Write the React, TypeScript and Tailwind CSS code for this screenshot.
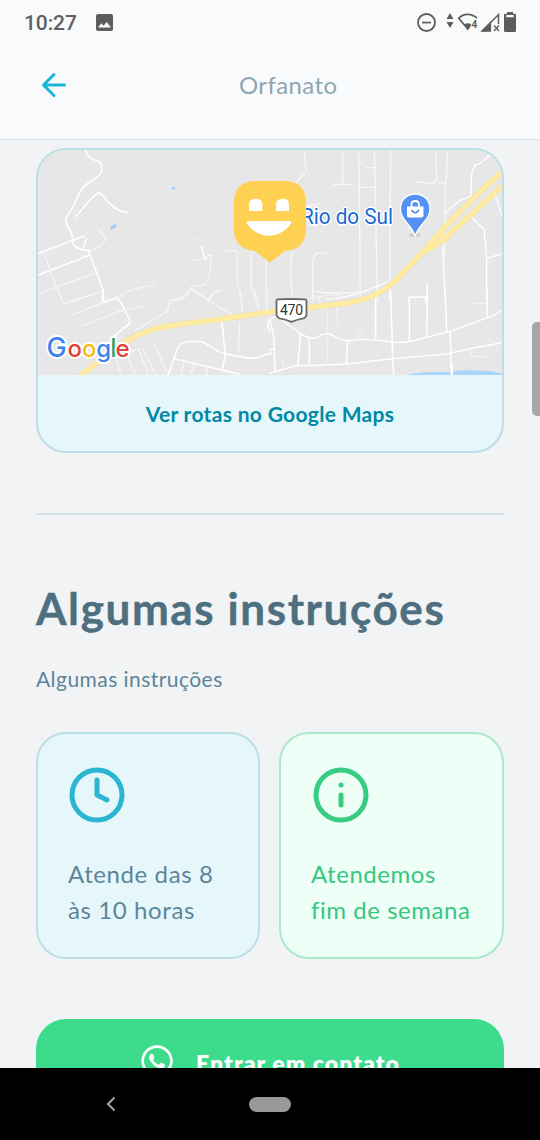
import React from "react";
import { FaWhatsapp } from "react-icons/fa";

function StatusBar() {
  return (
    <div className="flex h-[46px] shrink-0 items-center pl-6 pr-6 font-['Roboto',sans-serif] text-[#5f6062]">
      <span className="text-[21px] font-medium leading-none tracking-[-0.1px]">10:27</span>
      <svg className="-mt-0.5 ml-[19px]" width="17" height="17" viewBox="0 0 17 17">
        <rect width="17" height="17" rx="2" fill="#5d5d5e" />
        <path d="M2 13.5 5.3 9.2 7.6 11.7 10.6 7.9 15 13.5Z" fill="#f9fafc" />
      </svg>
      <svg className="-mr-0.5 ml-auto" width="102" height="24" viewBox="416 11 102 24" fill="#5d5d5e">
        <circle cx="426.5" cy="22.5" r="8.5" fill="none" stroke="#5d5d5e" strokeWidth="1.8" />
        <path d="M422 21.7h9v1.7h-9z" />
        <path d="M450 13l3.500 6h-7zM450 28l3.500-6h-7z" />
        <path d="M477 18.2C471 12.8 463.500 13.6 458.800 18.2L467.700 29 470 26" fill="none" stroke="#5d5d5e" strokeWidth="1.7" />
        <path d="M464 24.600q3.700-2.600 7.400 0l-3.700 5.600z" />
        <text x="471.6" y="27.8" fontSize="10" fontWeight="700" fontFamily="Roboto, sans-serif">4</text>
        <path d="M498.500 24V14.500L482.800 30.500H491" fill="none" stroke="#5d5d5e" strokeWidth="1.500" />
        <path d="M482 31l8.500-8.500V31zM494 25.500l5 5.500M499 25.500l-5 5.500" stroke="#5d5d5e" strokeWidth="1.300" />
        <path d="M504 15q0-1.300 1.300-1.300h1.700V12h6v1.700h1.700q1.300 0 1.300 1.300v15.700q0 1.300-1.300 1.300h-9.400q-1.300 0-1.300-1.300z" />
        <path d="M506.300 15h7.400v2.300h-7.400z" fill="#f9fafc" />
      </svg>
    </div>
  );
}

function RouteMap() {
  return (
    <svg className="block h-[225px] w-full" viewBox="38 150 464 225" preserveAspectRatio="none" fill="none">
      <rect x="37" y="149" width="467" height="228" fill="#e7e7e7" />

      {/* north-west roads */}
      <g transform="translate(30 140) scale(.33333)" stroke="#fff" strokeWidth="5" strokeLinecap="round" strokeLinejoin="round">
        <path d="M166 30C172 52 186 60 202 62C220 72 219 92 208 105C192 122 168 128 153 151C142 174 130 201 112 228C100 247 116 260 124 280C130 299 125 311 136 320C153 330 163 332 181 331M136 229C159 210 181 171 205 159C217 154 221 178 243 193C258 209 276 216 294 218" />
        <path d="M24 341 163 287M160 322l9-27M22 406 178 346M176 335l42 112v38" />
        <path d="M514 320l12 38" />
        <g stroke="#f5f5f5" strokeWidth="4">
          <path d="M181 331C202 327 224 313 225 296C221 278 210 278 202 264M22 462 195 400M43 342l53 140M114 488l101-34M255 481C287 452 315 444 373 436M490 361l27-3M530 358l4-12h14M543 350C542 390 540 414 525 434L485 439 465 470 425 480M485 447l50 34q15-31 30-29M582 332l33-1 5 7 3 92 12 38M664 332v110l22 38M709 358v122" />
        </g>
        <circle cx="430" cy="145" r="5" fill="#a6cdf2" stroke="none" />
        <path d="M246 263l8-5" stroke="#9fcbf4" strokeWidth="10" />
        <circle cx="494" cy="282" r="4" fill="#dad9df" stroke="none" />
      </g>

      {/* north-east roads */}
      <g transform="translate(270 140) scale(.33333)" stroke="#f8f8f8" strokeWidth="4" strokeLinecap="round" strokeLinejoin="round">
        <path d="M102 34l7 60-32 35M218 34v98M190 133h60M266 34l2 108 3 338M268 142h47M313 34l4 167 3 180 3 100M288 83h25M362 30l-3 450M498 34l2 88-9 9-50-5M532 34l-3 94h-23M526 130l-2 220M68 336C61 365 59 400 68 480M128 480V364q2-17 11-23l29-3M130 453C180 462 220 462 271 455M108 200l40-10" />
        <path d="M675 30 630 71 615 75 605 103 603 169 570 181 530 215M602 229l40 39 8 84v130M650 355l50-15M670 160l10 15 15 50M518 320l8 165M418 490v-18h50v18M472 430v50M170 478C235 475 300 450 350 426" stroke="#fff" />
      </g>

      {/* south-west roads */}
      <g transform="translate(30 290) scale(.33333)" stroke="#fff" strokeWidth="4" strokeLinecap="round" strokeLinejoin="round">
        <path d="M220 0v28l8 8 33-14 12 16 26 50q2 17-13 22l-34 28M415 255l25-73C447 156 467 151 518 156C547 171 552 182 585 192C633 199 655 207 680 204C694 200 704 193 725 190M436 207l190 45M575 90l11 105-10 45M718 90q-10 15 2 34" strokeWidth="5" />
        <g stroke="#f6f6f6">
          <path d="M84 2l17 39 92-29M131 73l93-37M157 108l110-44 72-15M313 123l100-60 8-31 20-1 39-22M485 0l121 74M570 0 550 12 536 37M628 0l6 35 3 38M670 0l17 60M629 100l-4 88M711 0v64M372 162l40 88M337 177l40 75M300 185l25-8 30 74M258 202l14 50M290 190l25 60M463 215l-10 38M492 223l-10 30M532 236l-3 18" />
        </g>
      </g>

      {/* south-east roads */}
      <g transform="translate(270 290) scale(.33333)" stroke="#fff" strokeWidth="4.500" strokeLinecap="round" strokeLinejoin="round">
        <path d="M0 87q15-13 35 3L91 130C112 143 125 149 143 142C155 130 172 130 188 135C205 147 214 152 230 152C280 145 333 149 375 157Q405 160 450 147L542 124 652 83Q680 75 697 60M0 250C30 242 59 229 83 227Q165 226 230 222L368 206 530 192 610 174 697 158M92 132l-9 95M118 144v81M233 154l-4 67M362 0l6 205 3 50M526 0l4 124M541 126l3 120M418 155V22h50M472 0l-2 138M652 0v82M317 25v119M0 92q14 47 13 85l2 68M0 180l9-3" />
        <g stroke="#f5f5f5" strokeWidth="3">
          <path d="M175 34l-4 95M199 51l2 32 6 21M173 146v78M261 112v37M270 118v30M278 112v37M608 40h42M602 178l4 21 46 2M35 205l6 30M120 25l150-22M150 40 145 20M205 30 200 8M270 3v30" />
        </g>
        <path d="M410 256q30-9 70-10h55l40-5q80-2 125 10v10H410z" fill="#a9d5fa" stroke="none" />
        <path d="M544 220l2 38" strokeWidth="7" />
      </g>

      {/* highway */}
      <g strokeLinecap="round" strokeLinejoin="round">
        <path d="M75 380C103 359 121 341 145 332C163 325 186 324 214 320L270 312L335 304.500C362 302 380 295 395 281L426.500 248.500C440 231 470 199 508 167M426.500 250.500C440 243 448 236 455 229L508 181M439.500 233l6.500 6" stroke="#efe0b0" strokeWidth="5.800" />
        <path d="M75 380C103 359 121 341 145 332C163 325 186 324 214 320L270 312L335 304.500C362 302 380 295 395 281L426.500 248.500C440 231 470 199 508 167M426.500 250.500C440 243 448 236 455 229L508 181M439.500 233l6.500 6" stroke="#ffeba1" strokeWidth="4.500" />
      </g>

      <path d="M277.500 299.300q14 -.6 27.500 0q1.500 0 1.500 2v13q0 3-3 4q-6 1-12 3.500q-6-2.500-12-3.500q-3-1-3-4v-13q0-2 1-2z" fill="#fff" stroke="#69696a" strokeWidth="1.800" />
      <text x="280" y="315.300" fontSize="14" fontFamily="Roboto, sans-serif" fill="#333" textLength="23">470</text>

      {/* shopping pin */}
      <ellipse cx="415" cy="235" rx="6" ry="2" fill="#cecece" />
      <path d="M415.200 236C411 224 400.500 220 400.500 209C400.500 200 407 194 415.200 194S430 200 430 209C430 220 419 224 415.200 236Z" fill="#5491f5" stroke="#fff" strokeWidth="1.300" />
      <path d="M407 206.500h16.500v9q0 2-2 2H409q-2 0-2-2z" fill="#fff" />
      <path d="M411.500 207v-2.500q0-3.500 3.700-3.500t3.700 3.500v2.500" stroke="#fff" strokeWidth="1.800" />
      <path d="M411.500 210q3.700 5.500 7.500 0" stroke="#4b82df" strokeWidth="1.500" />
      <text x="301" y="224" fontSize="22.500" fontFamily="Roboto, sans-serif" textLength="92" lengthAdjust="spacingAndGlyphs" fill="#1968d3" stroke="#fff" strokeWidth="3" strokeLinejoin="round" paintOrder="stroke">Rio do Sul</text>

      {/* orphanage marker */}
      <path d="M256 181h28q22 0 22 22v26q0 20-21 22l-15 11.500L255 251q-21-2-21-22v-26q0-22 22-22z" fill="#ffd152" />
      <path d="M249 211v-6q0-6.300 6.700-6.300t6.700 6.300v6zM276 211v-6q0-6.300 6.600-6.300T289 205v6z" fill="#fff" />
      <path d="M248.500 221h41q2.500 0 1.500 2.500C285 232 277 235.700 269 235.700S253 232 247 223.500q-1-2.500 1.500-2.500z" fill="#fff" />

      {/* provider wordmark */}
      <text y="356.700" fontSize="24" fontWeight="500" fontFamily="Inter, sans-serif" stroke="#fff" strokeWidth="4" strokeLinejoin="round" paintOrder="stroke">
        <tspan x="46.500" fill="#4280ef" fontSize="27">G</tspan>
        <tspan x="67.500" fill="#e04438">o</tspan>
        <tspan x="82" fill="#f5b912">o</tspan>
        <tspan x="96.300" fill="#4280ef">g</tspan>
        <tspan x="110.300" fill="#39a457" fontSize="25">l</tspan>
        <tspan x="115.500" fill="#e04438">e</tspan>
      </text>
    </svg>
  );
}

function ClockIcon() {
  return (
    <svg className="block size-[60px]" viewBox="0 0 24 24" fill="none" stroke="#2ab5d1" strokeWidth="2" strokeLinecap="round" strokeLinejoin="round">
      <circle cx="12" cy="12" r="10" />
      <path d="M12 6v6l4 2" />
    </svg>
  );
}

function InfoIcon() {
  return (
    <svg className="block size-[60px]" viewBox="0 0 24 24" fill="none" stroke="#39cc83" strokeWidth="2" strokeLinecap="round" strokeLinejoin="round">
      <circle cx="12" cy="12" r="10" />
      <path d="M12 16v-4M12 8h.01" />
    </svg>
  );
}

export default function App() {
  return (
    <div className="relative flex h-[1140px] w-[540px] flex-col overflow-hidden bg-[#f2f3f5] font-['Lato',sans-serif]">
      <header className="flex h-[140px] shrink-0 flex-col border-b border-[#dde3ea] bg-[#f9fafc]">
        <StatusBar />
        <div className="flex h-[77px] items-center pl-9">
          <svg className="size-9" viewBox="0 0 24 24" fill="none" stroke="#15b6d6" strokeWidth="2" strokeLinecap="round" strokeLinejoin="round">
            <path d="M19 12H5M12 19l-7-7 7-7" />
          </svg>
          <span className="ml-[167px] mt-px text-2xl tracking-[0.4px] text-[#8fa7b2]">Orfanato</span>
        </div>
      </header>

      <main className="min-h-0 flex-1 overflow-hidden px-9 pt-2">
        <section className="h-[305px] overflow-hidden rounded-[30px] border-2 border-[#bcdee5] bg-[#e6f7fb]">
          <RouteMap />
          <div className="flex h-[77px] items-center justify-center text-[21px] font-bold tracking-[0.32px] text-[#0089a5]">
            <span>Ver rotas no Google Maps</span>
          </div>
        </section>

        <div className="mt-[60px] h-[2px] bg-[#d3e2e6]" />

        <h1 className="mt-[63px] h-[60px] whitespace-nowrap text-[44px] font-bold leading-[60px] tracking-[1.6px] text-[#4d6f80] [-webkit-text-stroke:0.4px_#4d6f80]">
          Algumas instruções
        </h1>
        <p className="mt-[26px] h-[30px] text-[21px] leading-[30px] tracking-[0.45px] text-[#5c8599]">Algumas instruções</p>

        <div className="mt-[38px] grid h-[227px] grid-cols-[224px_225px] justify-between">
          <div className="rounded-[30px] border-2 border-[#bcdee5] bg-[#e6f7fb] pl-[29px] pt-[31px]">
            <ClockIcon />
            <p className="ml-px mt-[31px] text-2xl leading-9 tracking-[0.6px] text-[#5c8599]">Atende das 8<br />às 10 horas</p>
          </div>
          <div className="rounded-[30px] border-2 border-[#abe9ca] bg-[#edfff6] pl-[30px] pt-[31px]">
            <InfoIcon />
            <p className="mt-[31px] whitespace-nowrap text-2xl leading-9 tracking-[0.55px] text-[#37c77f]">Atendemos<br />fim de semana</p>
          </div>
        </div>

        <button className="mt-[60px] flex h-[84px] w-full items-center rounded-[30px] bg-[#3cdc8c] pl-[105px] text-white">
          <FaWhatsapp size={36} className="-ml-0.5" />
          <span className="ml-[21px] whitespace-nowrap pt-1 text-[23px] font-extrabold tracking-[1.05px]">Entrar em contato</span>
        </button>
      </main>

      <nav className="flex h-[72px] shrink-0 items-center bg-black pl-[106px]">
        <svg width="10" height="16" viewBox="0 0 10 16" fill="none" stroke="#a5a5a5" strokeWidth="2">
          <path d="M8.500 1.500 2 8l6.500 6.500" />
        </svg>
        <div className="ml-[133px] h-[15px] w-[42px] rounded-full bg-[#999]" />
      </nav>
      <div className="absolute right-0 top-[322px] h-[94px] w-2 rounded-l-[5px] bg-[#a7a7a7]" />
    </div>
  );
}
